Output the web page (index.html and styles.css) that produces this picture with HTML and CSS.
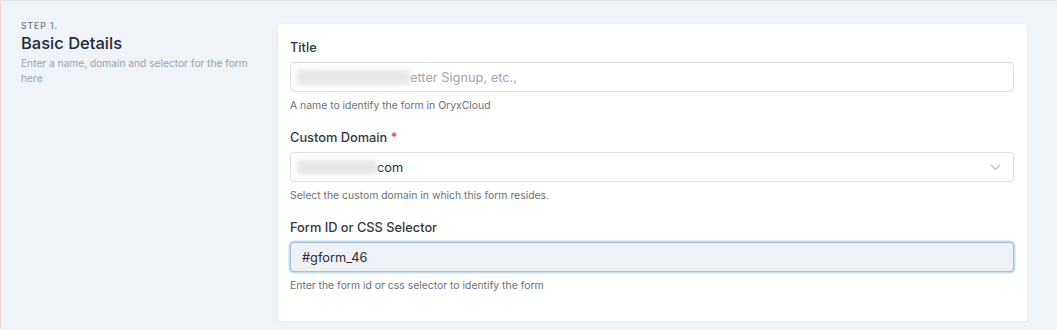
FILE: index.html
```html
<!DOCTYPE html>
<html lang="en">
<head>
    <meta charset="UTF-8">
    <meta name="viewport" content="width=device-width, initial-scale=1.0">
    <title>Form Settings</title>
    <link rel="stylesheet" href="styles.css">
</head>
<body>
    <div class="page">
        <div class="intro">
            <div class="step">STEP 1.</div>
            <h2>Basic Details</h2>
            <p>Enter a name, domain and selector for the form here</p>
        </div>

        <div class="card">
            <div class="field">
                <label>Title</label>
                <div class="input">
                    <span class="redacted" style="width: 113px"></span>
                    <span class="placeholder">etter Signup, etc.,</span>
                </div>
                <div class="help">A name to identify the form in OryxCloud</div>
            </div>

            <div class="field">
                <label>Custom Domain <span class="req">*</span></label>
                <div class="input select">
                    <span class="redacted" style="width: 80px"></span>
                    <span class="value">com</span>
                    <svg class="chevron" width="11" height="7" viewBox="0 0 11 7">
                        <path d="M1 1l4.5 4.5L10 1" fill="none" stroke="#b9bec5" stroke-width="1.2"/>
                    </svg>
                </div>
                <div class="help">Select the custom domain in which this form resides.</div>
            </div>

            <div class="field">
                <label>Form ID or CSS Selector</label>
                <div class="input focused">
                    <span class="value">#gform_46</span>
                </div>
                <div class="help">Enter the form id or css selector to identify the form</div>
            </div>
        </div>
    </div>
</body>
</html>
```

FILE: styles.css
```css
body {
    margin: 0;
    font-family: Inter, 'Noto Sans', sans-serif;
    background-color: #f0f3f7;
    border-top: 1px solid #e3e6ea;
    border-left: 1px solid #f6d4d2;
    height: 329px;
    box-sizing: border-box;
    overflow: hidden;
}
.page {
    display: grid;
    grid-template-columns: 256px 1fr;
    padding: 19px 29px 0 20px;
}
.intro .step {
    font-size: 8.5px;
    font-weight: 500;
    letter-spacing: 1px;
    color: #6b7280;
    line-height: 12px;
}
.intro h2 {
    margin: 0;
    font-size: 16.5px;
    font-weight: 500;
    line-height: 22px;
    color: #1f2937;
}
.intro p {
    margin: 2px 0 0;
    font-size: 10.2px;
    line-height: 15px;
    color: #9ca3af;
    max-width: 235px;
}
.card {
    margin-top: 3px;
    background-color: white;
    border: 1px solid #eaedf1;
    border-radius: 3px;
    padding: 14px 13px 14px 12px;
    height: 299px;
    box-sizing: border-box;
    box-shadow: 0 1px 2px rgba(0,0,0,0.03);
}
.field {
    margin-bottom: 15px;
}
.field label {
    display: block;
    font-size: 12.8px;
    font-weight: 500;
    line-height: 20px;
    color: #34373c;
    margin-bottom: 4px;
}
.req {
    color: #e0453e;
}
.input {
    height: 30px;
    box-sizing: border-box;
    border: 1px solid #dcdfe3;
    border-radius: 4px;
    padding: 0 11px;
    display: flex;
    align-items: center;
    font-size: 12.8px;
}
.redacted {
    display: inline-block;
    height: 15px;
    background-color: #e6e7e9;
    filter: blur(2.5px);
    margin-left: -5px;
}
.placeholder {
    color: #a2a6ac;
}
.value {
    color: #2b2e33;
}
.select .chevron {
    margin-left: auto;
    margin-right: 1px;
}
.focused {
    background-color: #eef2f7;
    border-color: #9ec1e3;
    box-shadow: 0 0 0 1.5px #c7dbef;
}
.help {
    margin-top: 7px;
    font-size: 10.4px;
    line-height: 14px;
    color: #6b7079;
}
```
